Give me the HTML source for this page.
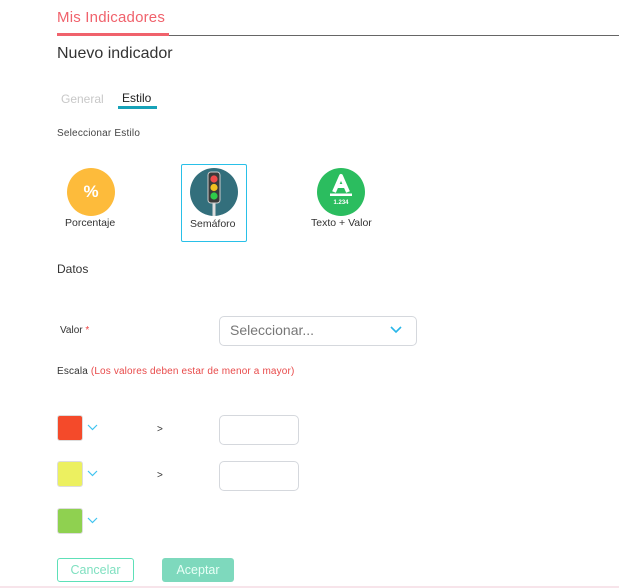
<!DOCTYPE html>
<html><head><meta charset="utf-8"><style>
*{margin:0;padding:0;box-sizing:border-box}
body{width:619px;height:588px;background:#fff;font-family:"Liberation Sans",sans-serif;position:relative;overflow:hidden;color:#333}
.a{position:absolute;white-space:nowrap}
.sw{position:absolute;left:57px;width:26px;height:26px;border-radius:3px;border:1px solid #ddd}
.chev{position:absolute;left:87px}
.inp{position:absolute;left:219px;width:80px;height:30px;border:1px solid #d5d8dd;border-radius:5px}
</style></head><body>
<div class="a" style="left:57px;top:9px;font-size:15px;color:#f0626c;letter-spacing:0.2px">Mis Indicadores</div>
<div class="a" style="left:57px;top:33px;width:112px;height:3px;background:#f0626c"></div>
<div class="a" style="left:169px;top:35px;width:450px;height:1px;background:#666"></div>
<div class="a" style="left:57px;top:45px;font-size:16px;color:#333">Nuevo indicador</div>
<div class="a" style="left:61px;top:92px;font-size:12px;color:#c8c8c8">General</div>
<div class="a" style="left:122px;top:91px;font-size:12px;color:#222">Estilo</div>
<div class="a" style="left:118px;top:106px;width:39px;height:3px;background:#17a2b8"></div>
<div class="a" style="left:57px;top:128px;font-size:10px;color:#444;letter-spacing:0.2px">Seleccionar Estilo</div>

<div class="a" style="left:67px;top:168px;width:48px;height:48px;border-radius:50%;background:#fdbb3b;color:#fff;font-weight:bold;font-size:17px;text-align:center;line-height:48px">%</div>
<div class="a" style="left:65px;top:217px;font-size:10.5px;color:#333">Porcentaje</div>

<div class="a" style="left:181px;top:164px;width:66px;height:78px;border:1px solid #29c0e8;border-radius:2px"></div>
<svg class="a" style="left:190px;top:168px" width="48" height="48" viewBox="0 0 48 48">
<circle cx="24" cy="24" r="24" fill="#336f7c"/>
<rect x="22.5" y="34" width="3" height="14" fill="#ddd"/>
<rect x="18" y="4" width="12" height="31" rx="3" fill="#3a3a3a" stroke="#ccc" stroke-width="1"/>
<circle cx="24" cy="11" r="3.6" fill="#ef4a4a"/>
<circle cx="24" cy="19.5" r="3.6" fill="#f0c020"/>
<circle cx="24" cy="28" r="3.6" fill="#2ecc4a"/>
</svg>
<div class="a" style="left:190px;top:218px;font-size:10.5px;color:#333">Semáforo</div>

<svg class="a" style="left:317px;top:168px" width="48" height="48" viewBox="0 0 48 48">
<circle cx="24" cy="24" r="24" fill="#2bbd5f"/>
<path d="M17 24 L24 8 L31 24 M20 18 H28" stroke="#fff" stroke-width="4" fill="none" stroke-linejoin="round"/>
<rect x="13" y="25.5" width="22" height="2.5" fill="#fff"/>
<text x="24" y="36" font-size="6" fill="#fff" text-anchor="middle" font-family="Liberation Sans" font-weight="bold">1.234</text>
</svg>
<div class="a" style="left:311px;top:217px;font-size:10.5px;color:#333">Texto + Valor</div>

<div class="a" style="left:57px;top:262px;font-size:12px;color:#333">Datos</div>
<div class="a" style="left:60px;top:325px;font-size:10px;color:#333">Valor <span style="color:#e44">*</span></div>
<div class="a" style="left:219px;top:316px;width:198px;height:30px;border:1px solid #d5d8dd;border-radius:5px"></div>
<div class="a" style="left:230px;top:322px;font-size:14px;color:#777">Seleccionar...</div>
<svg class="a" style="left:390px;top:326px" width="12" height="8"><path d="M1 1 L6 6 L11 1" stroke="#29b6e8" stroke-width="1.6" fill="none"/></svg>
<div class="a" style="left:57px;top:366px;font-size:10px;color:#333;letter-spacing:0.15px">Escala <span style="color:#e84a4a">(Los valores deben estar de menor a mayor)</span></div>

<div class="sw" style="top:415px;background:#f44a2a"></div>
<div class="sw" style="top:461px;background:#ecf060"></div>
<div class="sw" style="top:508px;background:#8fd150"></div>
<svg class="chev" style="top:424px" width="12" height="8"><path d="M1 1 L5.5 5.5 L10 1" stroke="#40c4f0" stroke-width="1.2" fill="none"/></svg>
<svg class="chev" style="top:470px" width="12" height="8"><path d="M1 1 L5.5 5.5 L10 1" stroke="#40c4f0" stroke-width="1.2" fill="none"/></svg>
<svg class="chev" style="top:517px" width="12" height="8"><path d="M1 1 L5.5 5.5 L10 1" stroke="#40c4f0" stroke-width="1.2" fill="none"/></svg>
<div class="a" style="left:157px;top:424px;font-size:10px">&gt;</div>
<div class="a" style="left:157px;top:470px;font-size:10px">&gt;</div>
<div class="inp" style="top:415px"></div>
<div class="inp" style="top:461px"></div>

<div class="a" style="left:57px;top:558px;width:77px;height:24px;border:1px solid #5ee0b8;border-radius:3px;color:#7fe0c0;font-size:12.5px;text-align:center;line-height:23px">Cancelar</div>
<div class="a" style="left:162px;top:558px;width:72px;height:24px;background:#7ed9bd;border-radius:3px;color:#e8fff6;font-size:12.5px;text-align:center;line-height:25px">Aceptar</div>
<div class="a" style="left:0;top:586px;width:619px;height:2px;background:#f7e4ea"></div>
</body></html>
